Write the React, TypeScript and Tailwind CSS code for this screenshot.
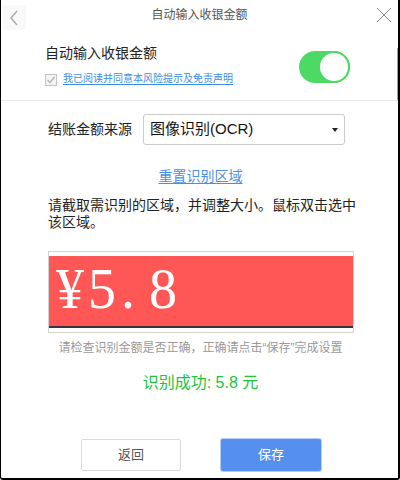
import React from "react";

export default function App() {
  return (
    <div className="relative w-[400px] h-[480px] bg-white border-l border-r-2 border-b-2 border-black rounded-b-[3px] flex flex-col font-['Liberation_Sans','Noto_Sans_CJK_SC',sans-serif] text-[#333] overflow-hidden">
      {/* scrollbar strip */}
      <div className="absolute right-[-1px] top-[48px] w-[2px] h-[52px] bg-[#8c9be0]" />

      {/* title bar */}
      <div className="h-[30px] grid grid-cols-[40px_1fr_40px] items-center">
        <div className="h-[30px] flex items-start">
          <div className="mt-[5px] ml-[2px] w-[23px] h-[25px] bg-[#f9f9f9] flex items-center justify-center">
            <svg width="10" height="16" viewBox="0 0 10 16" className="ml-[-2px]">
              <polyline points="8,1 2,8 8,15" fill="none" stroke="#a8a8a8" strokeWidth="1.4" />
            </svg>
          </div>
        </div>
        <div className="text-center text-[12px] text-[#555] leading-[16px] -mt-[1px]">自动输入收银金额</div>
        <div className="flex justify-end pr-[6px]">
          <svg width="16" height="16" viewBox="0 0 16 16" className="-mt-[1px]">
            <line x1="1" y1="1" x2="15" y2="15" stroke="#8a8a8a" strokeWidth="1" />
            <line x1="15" y1="1" x2="1" y2="15" stroke="#8a8a8a" strokeWidth="1" />
          </svg>
        </div>
      </div>

      {/* section 1 */}
      <div className="h-[71px] border-b border-[#e8e8e8] pl-[44px] pr-[48px] pt-[13px] flex justify-between items-start">
        <div className="flex flex-col">
          <div className="text-[14px] leading-[20px] text-[#222]">自动输入收银金额</div>
          <div className="mt-[8px] flex items-center h-[16px]">
            <div className="w-[12px] h-[12px] border border-[#c4c4c4] bg-[#f3f3f3] flex items-center justify-center mt-[2px]">
              <svg width="10" height="10" viewBox="0 0 10 10">
                <polyline points="1.5,5 4,7.5 8.5,2" fill="none" stroke="#b5b5b5" strokeWidth="1.3" />
              </svg>
            </div>
            <span className="ml-[6px] text-[10px] leading-[16px] text-[#3a8ee6] underline underline-offset-2">
              我已阅读并同意本风险提示及免责声明
            </span>
          </div>
        </div>
        <div className="mt-[8px] w-[51px] h-[32px] rounded-full bg-[#4cd964] relative">
          <div className="absolute right-0 top-0 w-[32px] h-[32px] rounded-full bg-white border-[2px] border-[#4cd964]" />
        </div>
      </div>

      {/* section 2 */}
      <div className="pt-[13px] pl-[47px] flex items-center">
        <span className="text-[14px] text-[#222]">结账金额来源</span>
        <div className="ml-[11px] w-[202px] h-[31px] border border-[#cccccc] rounded-[3px] flex items-center justify-between pl-[6px] pr-[6px]">
          <span className="text-[15px] text-[#111]">图像识别(OCR)</span>
          <svg width="6" height="4" viewBox="0 0 6 4">
            <polygon points="0,0 6,0 3,4" fill="#222" />
          </svg>
        </div>
      </div>

      <div className="mt-[21px] text-center text-[14px] leading-[20px]">
        <span className="text-[#4a90e2] underline underline-offset-2 pl-[2px]">重置识别区域</span>
      </div>

      <div className="mt-[11px] ml-[47px] w-[310px] text-[14px] leading-[17px] text-[#222]">
        请截取需识别的区域，并调整大小。鼠标双击选中该区域。
      </div>

      {/* captured image */}
      <div className="mt-[20px] ml-[47px] w-[306px] h-[82px] border border-[#d3d3d3] pt-[4px]">
        <div className="h-[72px] bg-[#ff5656] border-b-2 border-[#3a3440] pl-[7px] pt-[5px] text-white font-['Liberation_Serif',serif] text-[56px] leading-none">
          <span className="inline-block w-[32px]">¥</span>
          <span className="inline-block w-[33px]">5</span>
          <span className="inline-block w-[28px]">.</span>
          <span className="inline-block">8</span>
        </div>
      </div>

      <div className="mt-[7px] text-center text-[12px] leading-[16px] text-[#999] pl-[2px]">
        请检查识别金额是否正确，正确请点击“保存”完成设置
      </div>

      <div className="mt-[17px] text-center text-[16px] leading-[20px] text-[#22c43a] pl-[2px]">
        识别成功: 5.8 元
      </div>

      <div className="mt-auto pb-[7px] pl-[3px] flex justify-center gap-[40px]">
        <button className="w-[100px] h-[32px] border border-[#d9d9d9] rounded-[2px] bg-white text-[13px] text-[#555]">
          返回
        </button>
        <button className="w-[100px] h-[32px] rounded-[2px] bg-[#5590ee] text-[13px] text-white ring-1 ring-[#b4cdf5]">
          保存
        </button>
      </div>
    </div>
  );
}
